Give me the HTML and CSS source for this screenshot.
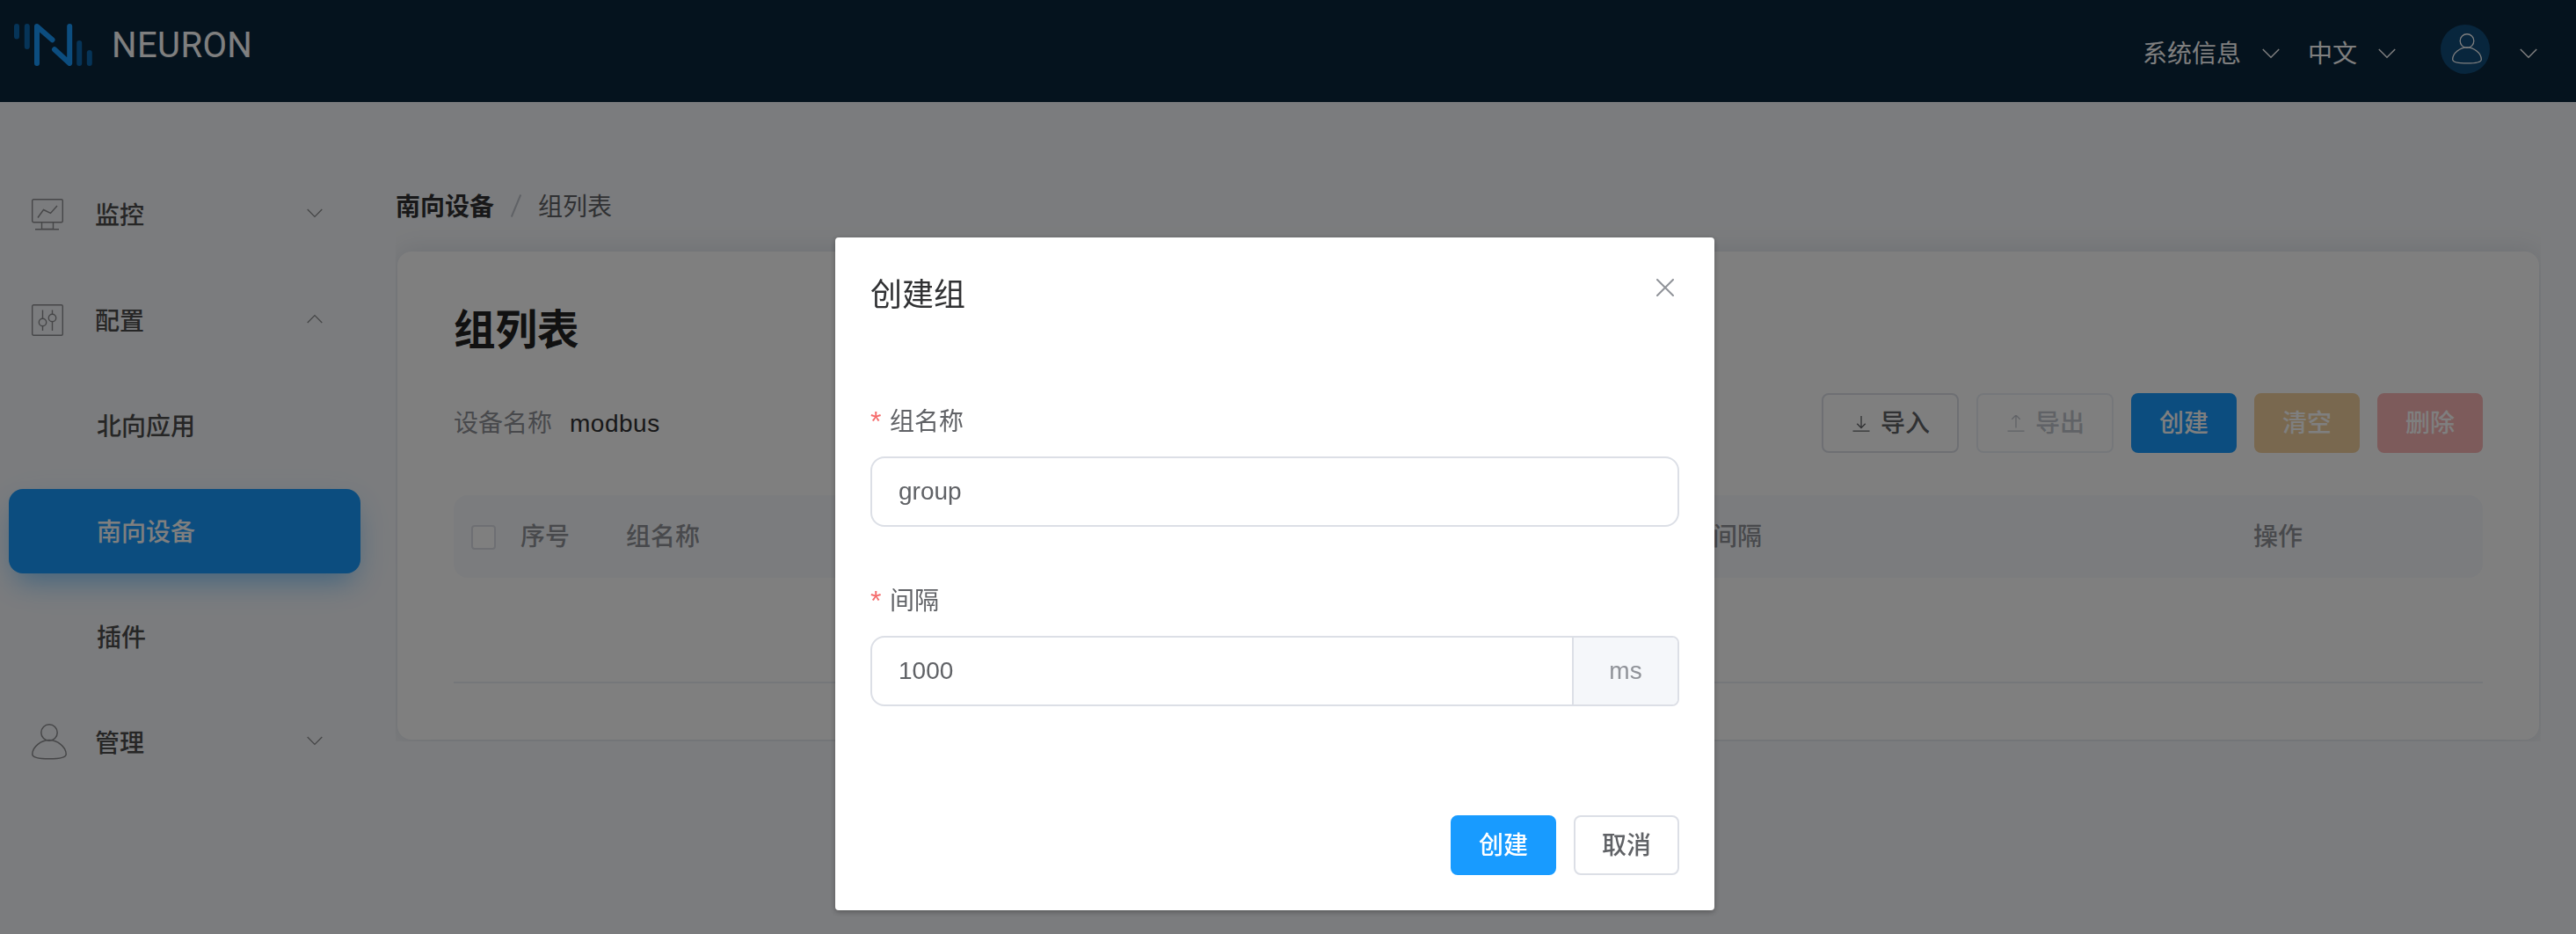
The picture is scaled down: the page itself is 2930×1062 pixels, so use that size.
FILE: index.html
```html
<!DOCTYPE html>
<html lang="zh-CN">
<head>
<meta charset="utf-8">
<title>Neuron</title>
<link rel="stylesheet" href="styles.css">
</head>
<body>
<svg class="defs" width="0" height="0" aria-hidden="true">
  <symbol id="chevron" viewBox="0 0 20 12"><path d="M.8 1 10 10.3 19.200 1" fill="none" stroke="currentColor" stroke-width="1.500"/></symbol>
  <symbol id="user" viewBox="0 0 40 41"><g fill="none" stroke="currentColor" stroke-width="1.500"><circle cx="20" cy="10" r="9.200"/><path d="M20 18.500C29 18.500 39.200 26 39.200 34.500C39.200 38.500 31 39.800 20 39.800S.8 38.500 .8 34.500C.8 26 11 18.500 20 18.500Z"/></g></symbol>
</svg>
<header class="header">
  <div class="brand">
    <svg class="logo" width="90" height="48" viewBox="0 0 90 48" fill="none" stroke-width="6" stroke-linecap="round">
      <g stroke="#0c68b0"><path d="M3 3v11.500M14.800 3v23M74.200 22v23M85.800 33v12"/></g>
      <g stroke="#189bff" stroke-linejoin="round"><path d="M26 45V3L43.500 18.300M46 29.200 63.200 45V3"/></g>
    </svg>
    <span class="brand-name">NEURON</span>
  </div>
  <div class="header-right">
    <span class="drop"><span class="txt">系统信息</span><svg width="20" height="12"><use href="#chevron"/></svg></span>
    <span class="drop lang"><span class="txt">中文</span><svg width="20" height="12"><use href="#chevron"/></svg></span>
    <span class="avatar"><svg width="34" height="35"><use href="#user"/></svg></span>
    <span class="drop"><svg width="20" height="12"><use href="#chevron"/></svg></span>
  </div>
</header>
<div class="layout">
  <nav class="sidebar">
    <div class="item group"><span class="ico"><svg width="36" height="36" viewBox="0 0 36 36" fill="none" stroke="currentColor" stroke-width="1.400"><rect x=".7" y=".7" width="34.600" height="26" rx="1.500"/><path d="M7 21.500 13.500 12.500 21.500 16.500 29 8M11.500 26.700V34.500H24.500V26.700M4 34.800H31"/></svg></span><span class="txt">监控</span><svg class="arrow" width="18" height="11"><use href="#chevron"/></svg></div>
    <div class="item group"><span class="ico"><svg width="36" height="36" viewBox="0 0 36 36" fill="none" stroke="currentColor" stroke-width="1.400"><rect x=".7" y=".7" width="34.600" height="34.600" rx="1.500"/><circle cx="12.500" cy="20.500" r="4.200"/><circle cx="23.500" cy="15.500" r="4.200"/><path d="M12.500 6.500V16.300M12.500 24.700V30M23.500 6.500V11.300M23.500 19.700V30"/></svg></span><span class="txt">配置</span><svg class="arrow up" width="18" height="11"><use href="#chevron"/></svg></div>
    <div class="item sub"><span class="txt">北向应用</span></div>
    <div class="item sub active"><span class="txt">南向设备</span></div>
    <div class="item sub"><span class="txt">插件</span></div>
    <div class="item group"><span class="ico"><svg class="person" width="40" height="41"><use href="#user"/></svg></span><span class="txt">管理</span><svg class="arrow" width="18" height="11"><use href="#chevron"/></svg></div>
  </nav>
  <main class="main">
    <div class="breadcrumb"><b class="txt">南向设备</b><svg width="12" height="26" viewBox="0 0 12 26"><path d="M.8 25.500 11.200.5" stroke="#c0c4cc" stroke-width="2"/></svg><span class="txt">组列表</span></div>
    <section class="card">
      <h1>组列表</h1>
      <div class="toolbar">
        <div class="device"><span>设备名称</span><span class="device-name">modbus</span></div>
        <div class="actions">
          <button class="btn wide"><svg width="20" height="20" viewBox="0 0 20 20" fill="none" stroke="currentColor" stroke-width="1.300"><path d="M10 1V14.500M5.300 9.700 10 14.500 14.700 9.700M.5 18.200H19.500"/></svg>导入</button>
          <button class="btn wide disabled"><svg width="20" height="20" viewBox="0 0 20 20" fill="none" stroke="currentColor" stroke-width="1.300"><path d="M10 14.500V0M5.300 4.800 10 0 14.700 4.800M.5 18.200H19.500"/></svg>导出</button>
          <button class="btn primary">创建</button>
          <button class="btn warning">清空</button>
          <button class="btn danger">删除</button>
        </div>
      </div>
      <div class="thead"><i class="checkbox"></i><span>序号</span><span>组名称</span><span>间隔</span><span>操作</span></div>
      <div class="tbody"></div>
    </section>
  </main>
</div>
<div class="overlay">
  <div class="dialog">
    <div class="dialog-head"><span>创建组</span><svg width="20" height="20" viewBox="0 0 20 20"><path d="M1 1 19 19M19 1 1 19" stroke="#909399" stroke-width="2" stroke-linecap="round"/></svg></div>
    <div class="field"><label><em>*</em>组名称</label><div class="input">group</div></div>
    <div class="field"><label><em>*</em>间隔</label><div class="input appended"><span>1000</span><span class="unit">ms</span></div></div>
    <div class="dialog-foot"><button class="btn primary">创建</button><button class="btn">取消</button></div>
  </div>
</div>
</body>
</html>
```
FILE: styles.css
```css
* { box-sizing: border-box; }
body {
  margin: 0;
  height: 1062px;
  overflow: hidden;
  background: #f7f9fc;
  font: 28px/40px "Liberation Sans", "Noto Sans CJK SC", sans-serif;
  color: #606266;
}
svg { display: block; flex: none; }
.defs { position: absolute; }
.txt { padding-top: 3px; }

.header {
  display: flex;
  justify-content: space-between;
  height: 116px;
  padding: 0 44px 0 16px;
  background: #0b263c;
  color: #fff;
}
.brand { display: flex; align-items: flex-start; padding-top: 27px; }
.brand-name { margin-left: 21px; font: 40px/50px Roboto, sans-serif; letter-spacing: .4px; }
.header-right { display: flex; align-items: center; padding-top: 5px; }
.drop { display: flex; align-items: center; gap: 24px; }
.lang { margin-left: 32px; }
.avatar {
  display: flex;
  align-items: center;
  justify-content: center;
  width: 56px;
  height: 56px;
  margin: 0 34px 10px 51px;
  padding-left: 4px;
  border-radius: 50%;
  background: #114c7a;
}

.layout { display: flex; }
.sidebar {
  display: flex;
  flex-direction: column;
  gap: 24px;
  width: 450px;
  flex: none;
  padding: 80px 40px 0 10px;
}
.item {
  display: flex;
  align-items: center;
  height: 96px;
  padding: 0 43px 0 26px;
  border-radius: 16px;
  color: #4d4d4d;
  font-weight: 500;
}
.sub { padding-left: 100px; }
.ico { width: 72px; color: #8c8d90; }
.person { margin-bottom: 2px; }
.arrow { margin: 0 0 3px auto; color: #8c8d90; }
.up { transform: rotate(180deg); }
.active {
  background: #189bff;
  color: #fff;
  box-shadow: 0 16px 30px -10px rgba(24, 155, 255, .5), 0 12px 50px rgba(24, 155, 255, .1);
}

.main { flex: 1; padding: 98px 42px 0 2px; min-width: 0; }
.breadcrumb { display: flex; align-items: center; gap: 19px; height: 40px; margin-left: -2px; }
.breadcrumb b { color: #303133; font-weight: 700; }
.card {
  height: 555px;
  margin-top: 32px;
  padding: 58px 64px 0;
  border-radius: 16px;
  background: #fff;
  box-shadow: 0 0 30px rgba(60, 80, 110, .16);
  clip-path: inset(-30px -2px -2px -2px);
}
h1 { margin: 0; color: #222; font-size: 47.500px; line-height: 64px; font-weight: 700; }
.toolbar { display: flex; justify-content: space-between; align-items: center; height: 70px; margin-top: 38px; }
.device { display: flex; gap: 20px; padding-top: 1px; color: #909399; }
.device-name { color: #303133; letter-spacing: .5px; }
.actions { display: flex; gap: 20px; }
.btn {
  display: flex;
  align-items: center;
  justify-content: center;
  gap: 12px;
  width: 120px;
  height: 68px;
  padding: 1px 0 0;
  border: 2px solid #dcdfe6;
  border-radius: 8px;
  background: #fff;
  color: #606266;
  font: inherit;
  font-weight: 500;
}
.wide { width: 156px; padding-left: 2px; }
.disabled { border-color: #ebeef5; color: #c0c4cc; }
.primary { background: #189bff; border-color: #189bff; color: #fff; }
.warning { background: #f3d19e; border-color: #f3d19e; color: #fff; }
.danger { background: #fab6b6; border-color: #fab6b6; color: #fff; }
.thead {
  display: grid;
  grid-template-columns: 56px 120px 1236px 615px auto;
  align-items: center;
  height: 94px;
  margin-top: 47px;
  padding: 2px 0 0 20px;
  border-radius: 16px;
  background: #f7f9fc;
  color: #909399;
  font-weight: 500;
}
.checkbox { width: 28px; height: 28px; border: 2px solid #dcdfe6; border-radius: 4px; background: #fff; }
.tbody { height: 120px; border-bottom: 2px solid #ebeef5; }

.overlay {
  position: fixed;
  inset: 0;
  display: flex;
  justify-content: center;
  align-items: flex-start;
  padding: 270px 30px 0 0;
  background: rgba(0, 0, 0, .5);
}
.dialog {
  width: 1000px;
  height: 765px;
  padding: 40px;
  border-radius: 4px;
  background: #fff;
  box-shadow: 0 2px 6px rgba(0, 0, 0, .3);
}
.dialog-head {
  display: flex;
  justify-content: space-between;
  height: 48px;
  padding-right: 6px;
  color: #303133;
  font-size: 36px;
  line-height: 51px;
}
.dialog-head svg { margin-top: 7px; }
.field { height: 204px; }
.dialog-head + .field { margin-top: 100px; }
.field label { display: flex; height: 61px; line-height: 43px; }
.field em { width: 22px; color: #f56c6c; font-size: 32px; font-style: normal; }
.input {
  display: flex;
  align-items: center;
  height: 80px;
  padding-left: 30px;
  border: 2px solid #dcdfe6;
  border-radius: 16px;
}
.appended { justify-content: space-between; border-radius: 16px 8px 8px 16px; overflow: hidden; }
.unit {
  display: flex;
  align-items: center;
  justify-content: center;
  width: 120px;
  height: 76px;
  border-left: 2px solid #dcdfe6;
  background: #f5f7fa;
  color: #909399;
}
.dialog-foot { display: flex; justify-content: flex-end; gap: 20px; margin-top: 61px; }
```
